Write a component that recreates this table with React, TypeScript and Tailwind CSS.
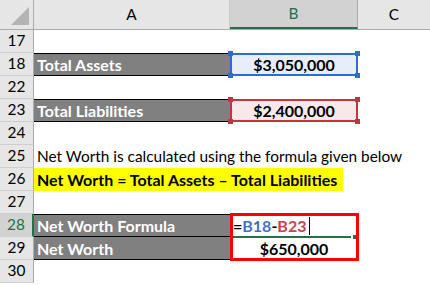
const font = { fontFamily: '"Lato", "Liberation Sans", sans-serif' };

function RowHead({ n, active }: { n: number; active?: boolean }) {
  return (
    <div
      className={
        active
          ? "w-[34px] shrink-0 h-full bg-[#d2d2d2] border-b border-[#d0d0d0] border-r-2 border-r-[#217346] text-[#217346] flex items-center justify-center"
          : "w-[34px] shrink-0 h-full bg-[#e6e6e6] border-b border-[#cfcfcf] border-r border-r-[#ababab] text-black flex items-center justify-center"
      }
    >
      {n}
    </div>
  );
}

function Row({ n, active, children }: { n: number; active?: boolean; children?: React.ReactNode }) {
  return (
    <div className="flex h-[23px]">
      <RowHead n={n} active={active} />
      <div className="flex-1 flex h-full">{children}</div>
    </div>
  );
}

function Handle({ pos, color }: { pos: string; color: string }) {
  return <div className={`absolute w-[5px] h-[5px] ${pos} ${color}`} />;
}

function RefCell({ value, tone }: { value: string; tone: "blue" | "red" }) {
  const blue = tone === "blue";
  const bg = blue ? "bg-[#2f6ccb]" : "bg-[#c0353f]";
  return (
    <div className="relative w-[128px] h-full">
      <div
        className={
          blue
            ? "absolute inset-0 border-2 border-[#2f6ccb] bg-[#e7eef9] flex items-center justify-center font-bold text-[16px] pt-px"
            : "absolute inset-0 border-2 border-[#c0353f] bg-[#f8e8e9] flex items-center justify-center font-bold text-[16px] pt-px"
        }
      >
        {value}
      </div>
      <Handle pos="-left-[2px] -top-[2px]" color={bg} />
      <Handle pos="-right-[2px] -top-[2px]" color={bg} />
      <Handle pos="-left-[2px] -bottom-[2px]" color={bg} />
      <Handle pos="-right-[2px] -bottom-[2px]" color={bg} />
    </div>
  );
}

function GrayLabel({ text, top }: { text: string; top?: boolean }) {
  return (
    <div
      className={
        top
          ? "w-[196px] h-full bg-[#808080] border-y border-black text-white font-bold text-[16px] flex items-center pl-[3px] pt-px"
          : "w-[196px] h-full bg-[#808080] border-b border-black text-white font-bold text-[16px] flex items-center pl-[3px] pt-px"
      }
    >
      {text}
    </div>
  );
}

export default function App() {
  return (
    <div className="w-[430px] h-[285px] bg-white overflow-hidden text-[15.4px] leading-none" style={font}>
      {/* column headers */}
      <div className="flex h-[30px] bg-[#e6e6e6] border-b border-[#ababab]">
        <div className="w-[34px] shrink-0 border-r border-[#ababab] relative">
          <div className="absolute right-[4px] bottom-[4px] w-0 h-0 border-l-[18px] border-l-transparent border-b-[18px] border-b-[#b4b4b4]" />
        </div>
        <div className="w-[196px] border-r border-[#cfcfcf] flex items-center justify-center">A</div>
        <div className="w-[128px] bg-[#d2d2d2] border-r border-[#ababab] border-b-2 border-b-[#217346] flex items-center justify-center text-[#217346]">
          B
        </div>
        <div className="flex-1 flex items-center justify-center">C</div>
      </div>

      <Row n={17} />
      <Row n={18}>
        <GrayLabel text="Total Assets" top />
        <RefCell value="$3,050,000" tone="blue" />
      </Row>
      <Row n={22} />
      <Row n={23}>
        <GrayLabel text="Total Liabilities" top />
        <RefCell value="$2,400,000" tone="red" />
      </Row>
      <Row n={24} />
      <Row n={25}>
        <div className="pl-[3px] flex items-center whitespace-nowrap pt-px">
          Net Worth is calculated using the formula given below
        </div>
      </Row>
      <Row n={26}>
        <div className="w-[309px] h-full bg-[#ffff00] font-bold text-[16px] flex items-center pl-[3px] whitespace-nowrap pt-px">
          Net Worth = Total Assets – Total Liabilities
        </div>
      </Row>
      <Row n={27} />
      <div className="relative">
        <Row n={28} active>
          <GrayLabel text="Net Worth Formula" top />
          <div className="w-[128px] h-full flex items-center pl-[3px] font-bold text-[16px] pt-px">
            <span>=</span>
            <span className="text-[#3f72c9]">B18</span>
            <span>-</span>
            <span className="text-[#c9414b]">B23</span>
            <span className="ml-[3px] w-px h-[18px] bg-black" />
          </div>
        </Row>
        <Row n={29}>
          <GrayLabel text="Net Worth" />
          <div className="w-[128px] h-full flex items-center justify-center font-bold text-[16px] pt-px">$650,000</div>
        </Row>
        <div className="absolute left-[230px] top-[-1px] w-[129px] h-[48px] border-[3px] border-[#ff0000]">
          <div className="absolute left-0 right-[5px] top-[20px] h-[2px] bg-[#217346]" />
          <div className="absolute right-0 top-[19px] w-[3px] h-[4px] bg-[#217346]" />
        </div>
      </div>
      <Row n={30} />
    </div>
  );
}
